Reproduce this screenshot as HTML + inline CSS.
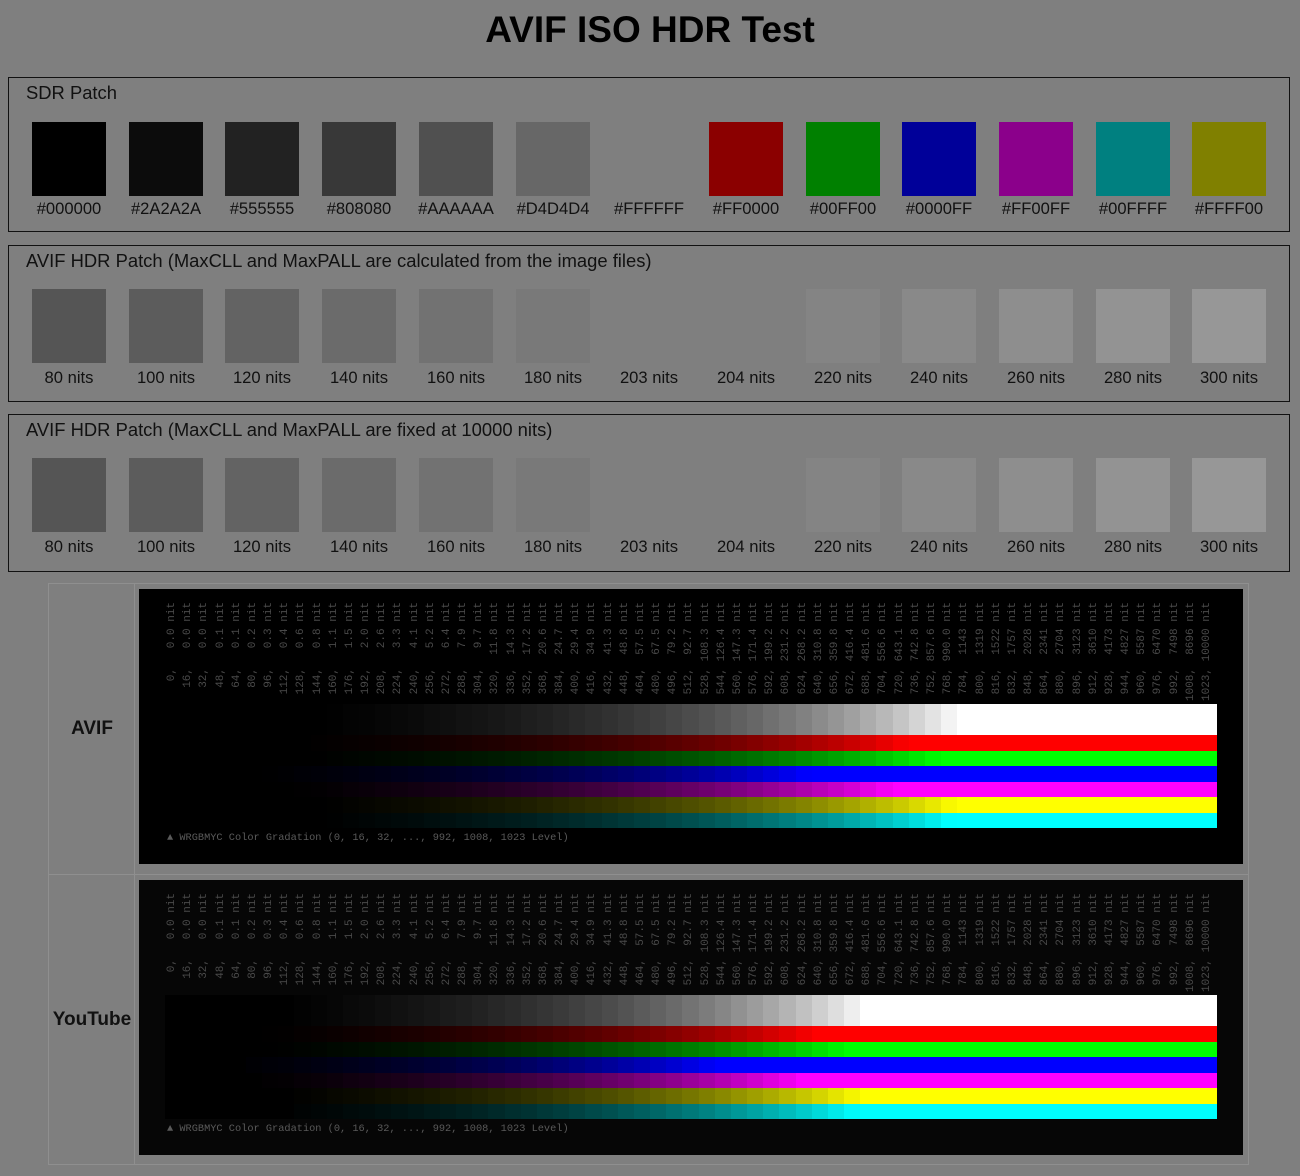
<!DOCTYPE html>
<html><head><meta charset="utf-8">
<style>
body{margin:0;background:#7f7f7f;font-family:"Liberation Sans",sans-serif;color:#000;width:1300px;height:1176px;overflow:hidden;position:relative}
h1{position:absolute;top:9px;left:0;width:1300px;text-align:center;font-size:37px;margin:0;font-weight:bold;line-height:42px}
.sec{position:absolute;left:8px;width:1282px;border:1px solid #111;box-sizing:border-box}
.sec .t{position:absolute;left:17px;top:4px;font-size:18.4px;color:#111}
.p{position:absolute;width:74px;height:74px}
.l{position:absolute;width:110px;text-align:center;font-size:16.6px;color:#111}
.tbl{position:absolute;left:48px;top:583px;width:1201px;height:582px;border:1px solid #8f8f8f;box-sizing:border-box}
.rl{position:absolute;left:0;width:86px;text-align:center;font-weight:bold;font-size:19px;color:#111}
.box{position:absolute;left:139px;width:1104px;height:275px;background:#000;overflow:hidden}
.lab{position:absolute;top:20px;height:92px;writing-mode:vertical-rl;transform:rotate(180deg);font:11px "Liberation Mono",monospace;color:#4a4a4a;white-space:pre;line-height:11px}
.col{position:absolute;width:17px}
.cap{position:absolute;left:28px;top:243px;font:10.3px "Liberation Mono",monospace;color:#5a5a5a;white-space:pre}
</style></head><body>
<h1>AVIF ISO HDR Test</h1>
<div class="sec" style="top:77px;height:155px"><div class="t">SDR Patch</div></div>
<div class="sec" style="top:245px;height:157px"><div class="t">AVIF HDR Patch (MaxCLL and MaxPALL are calculated from the image files)</div></div>
<div class="sec" style="top:414px;height:158px"><div class="t">AVIF HDR Patch (MaxCLL and MaxPALL are fixed at 10000 nits)</div></div>
<div id="patches"></div>
<div class="tbl">
<div style="position:absolute;left:85px;top:0;bottom:0;border-left:1px solid #8f8f8f"></div>
<div style="position:absolute;left:0;right:0;top:290px;border-top:1px solid #8f8f8f"></div>
<div class="rl" style="top:134px">AVIF</div>
<div class="rl" style="top:425px">YouTube</div>
</div>
<div class="box" id="b1" style="top:589px"></div>
<div class="box" id="b2" style="top:880px;background:#060606"></div>
<script>
var P=document.getElementById('patches'),h='';
var sdr=[['#000000','#000000'],['#0c0c0c','#2A2A2A'],['#222222','#555555'],['#383838','#808080'],['#505050','#AAAAAA'],['#676767','#D4D4D4'],['#7f7f7f','#FFFFFF'],['#8b0000','#FF0000'],['#008000','#00FF00'],['#000099','#0000FF'],['#8b008b','#FF00FF'],['#008080','#00FFFF'],['#808000','#FFFF00']];
var hv=[[80,0x55],[100,0x5c],[120,0x63],[140,0x6b],[160,0x72],[180,0x79],[203,0x7f],[204,0x7f],[220,0x84],[240,0x89],[260,0x8e],[280,0x93],[300,0x97]];
for(var i=0;i<13;i++){var x=32+Math.round(i*96.7);
h+='<div class="p" style="left:'+x+'px;top:122px;background:'+sdr[i][0]+'"></div><div class="l" style="left:'+(x-18)+'px;top:199px">'+sdr[i][1]+'</div>';
var g='rgb('+hv[i][1]+','+hv[i][1]+','+hv[i][1]+')';
h+='<div class="p" style="left:'+x+'px;top:289px;background:'+g+'"></div><div class="l" style="left:'+(x-18)+'px;top:368px">'+hv[i][0]+' nits</div>';
h+='<div class="p" style="left:'+x+'px;top:458px;background:'+g+'"></div><div class="l" style="left:'+(x-18)+'px;top:537px">'+hv[i][0]+' nits</div>';}
P.innerHTML=h;
var N=['0.0','0.0','0.0','0.1','0.1','0.2','0.3','0.4','0.6','0.8','1.1','1.5','2.0','2.6','3.3','4.1','5.2','6.4','7.9','9.7','11.8','14.3','17.2','20.6','24.7','29.4','34.9','41.3','48.8','57.5','67.5','79.2','92.7','108.3','126.4','147.3','171.4','199.2','231.2','268.2','310.8','359.8','416.4','481.6','556.6','643.1','742.8','857.6','990.0','1143','1319','1522','1757','2028','2341','2704','3123','3610','4173','4827','5587','6470','7498','8696','10000'];
function pad(s,n){s=String(s);while(s.length<n)s=' '+s;return s}
function build(id,den){var b=document.getElementById(id),o='';
var rows=[[1,1,1,0,31,1],[1,0,0,31,16,1.6],[0,1,0,47,15,1.2],[0,0,1,62,16,4],[1,0,1,78,15,1.8],[1,1,0,93,16,1.05],[0,1,1,109,15,1.1]];
for(var i=0;i<65;i++){var lv=i==64?1023:i*16;var n=parseFloat(N[i]);var x=26+i*16.17;
o+='<div class="lab" style="left:'+(x+2)+'px">'+pad(lv,4)+','+pad(N[i],6)+' nit</div>';
for(var r=0;r<7;r++){var R=rows[r];var v=Math.min(1,n*R[5]/den);v=Math.pow(v,1/2.2);v=Math.max(0,(v-0.04)/0.96);v=Math.round(v*255);
o+='<div class="col" style="left:'+x.toFixed(2)+'px;top:'+(115+R[3])+'px;height:'+R[4]+'px;background:rgb('+(R[0]*v)+','+(R[1]*v)+','+(R[2]*v)+')"></div>';}}
o+='<div class="cap">▲ WRGBMYC Color Gradation (0, 16, 32, ..., 992, 1008, 1023 Level)</div>';
b.innerHTML=o;}
build('b1',1100);build('b2',480);
</script>
</body></html>
